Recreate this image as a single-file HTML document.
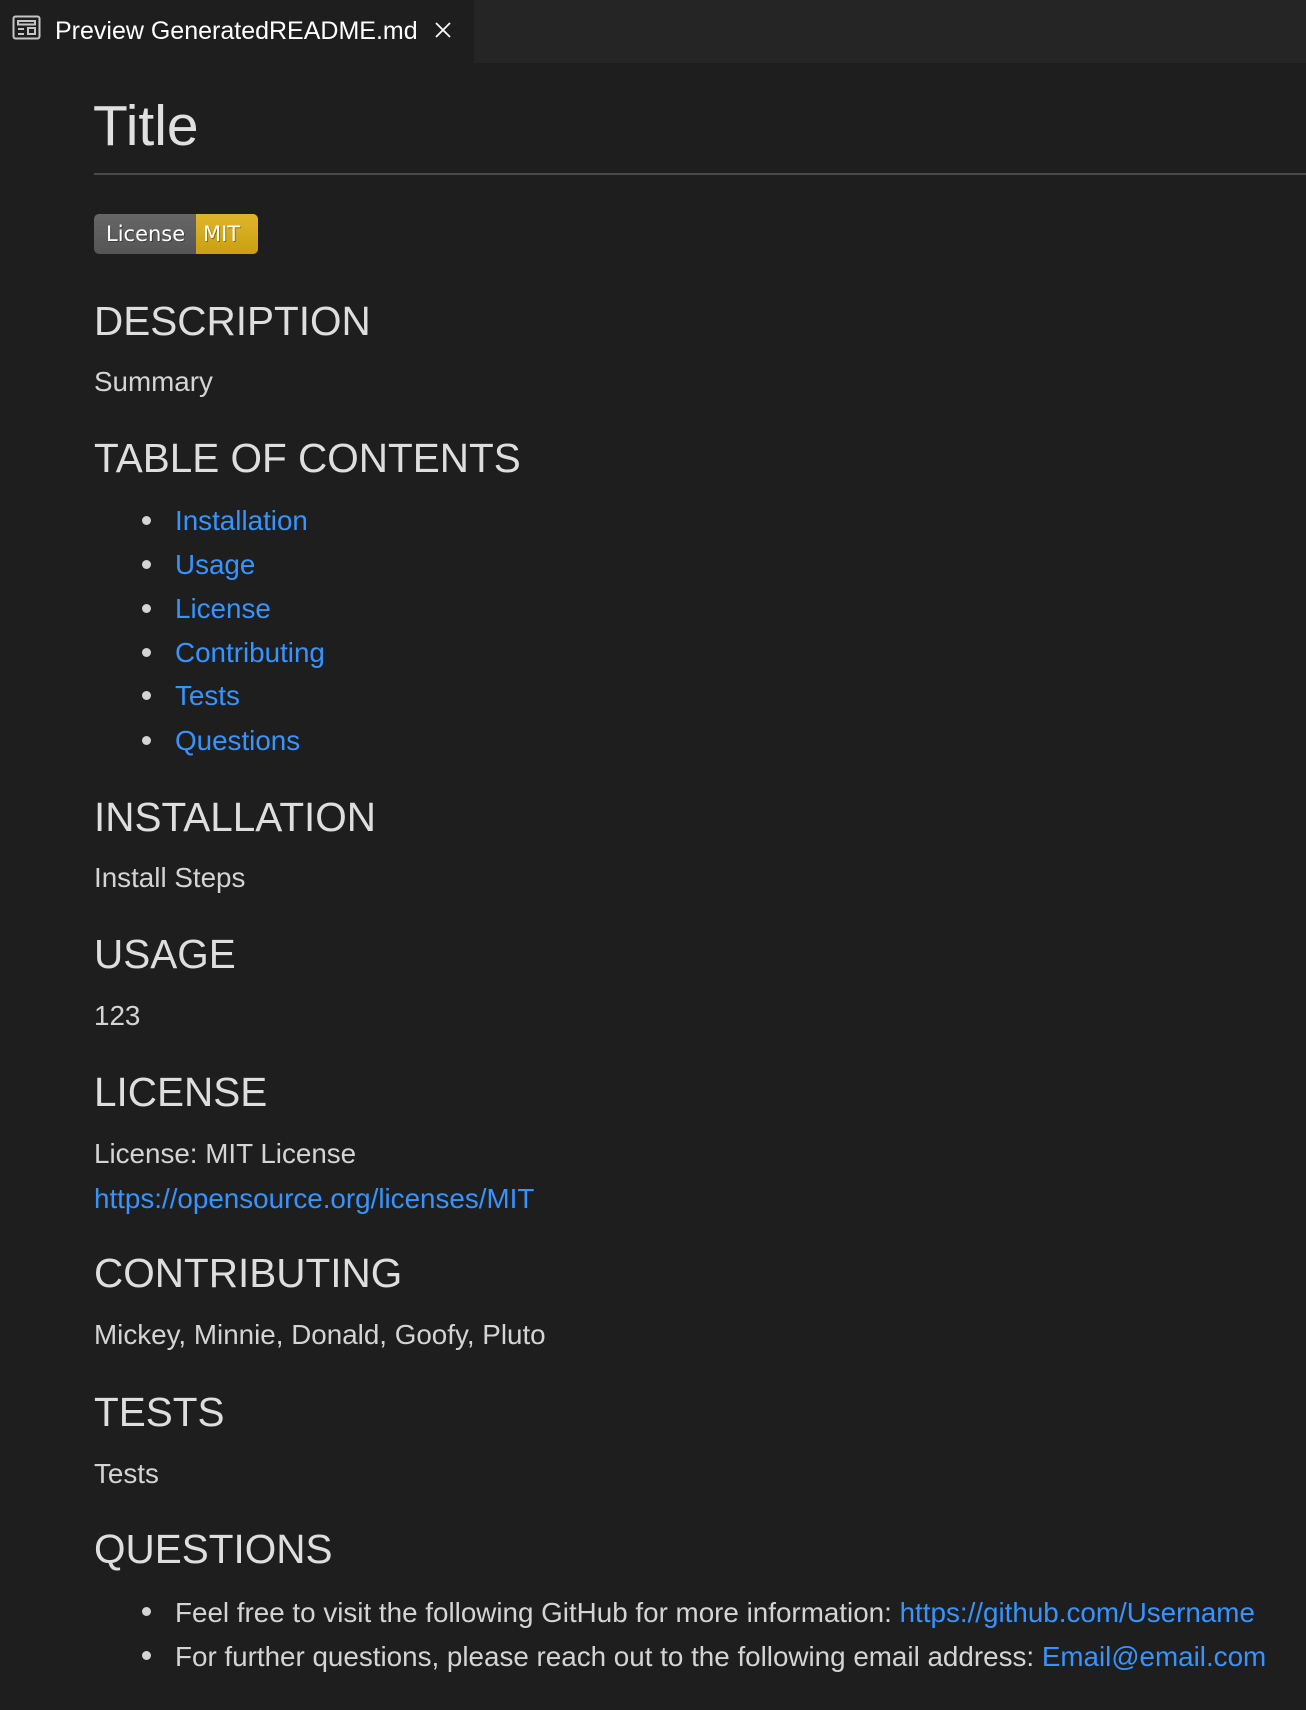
<!DOCTYPE html>
<html><head><meta charset="utf-8"><style>
html,body{margin:0;padding:0}
body{width:1306px;height:1710px;background:#1e1e1e;position:relative;overflow:hidden;font-family:"Liberation Sans",sans-serif;color:#d4d4d4}
.t{position:absolute;white-space:nowrap;line-height:1}
.h2{font-size:40.5px;color:#dedede}
.p{font-size:27.8px;margin-top:1px}
a{color:#3794ff;text-decoration:none}
.b{position:absolute;width:9px;height:9px;border-radius:50%;background:#d4d4d4;left:142px}
</style></head><body>
<div style="position:absolute;left:0;top:0;width:1306px;height:63px;background:#252526"></div>
<div style="position:absolute;left:0;top:0;width:474px;height:63px;background:#1e1e1e"></div>
<svg style="position:absolute;left:12px;top:15px" width="30" height="26" viewBox="0 0 30 26" fill="none" stroke="#c5c5c5" stroke-width="2">
<rect x="1.5" y="1.5" width="26" height="22" rx="2"/>
<rect x="6" y="6" width="17" height="3.5"/>
<line x1="6" y1="14" x2="12" y2="14"/><line x1="6" y1="19" x2="12" y2="19"/>
<rect x="16" y="13" width="7" height="6"/>
</svg>
<div class="t" style="left:55px;top:19px;font-size:25px;color:#fff">Preview GeneratedREADME.md</div>
<svg style="position:absolute;left:434px;top:21px" width="18" height="18" viewBox="0 0 18 18" stroke="#fff" stroke-width="1.8"><line x1="2" y1="2" x2="16" y2="16"/><line x1="16" y1="2" x2="2" y2="16"/></svg>

<div class="t" style="left:93px;top:98px;font-size:57px;color:#e0e0e0">Title</div>
<div style="position:absolute;left:94px;top:173px;width:1212px;height:2px;background:#4a4a4a"></div>

<div style="position:absolute;left:94px;top:214px;width:164px;height:40px;border-radius:5px;overflow:hidden;font-family:'DejaVu Sans',sans-serif;font-size:21px;color:#fff;text-shadow:1px 1px 0 rgba(0,0,0,.35)">
<div style="position:absolute;left:0;top:0;width:102px;height:40px;background:linear-gradient(#666,#555)"><span style="position:absolute;left:12px;top:8px">License</span></div>
<div style="position:absolute;left:102px;top:0;width:62px;height:40px;background:linear-gradient(#e0b52a,#c9a012)"><span style="position:absolute;left:7px;top:8px">MIT</span></div>
</div>

<div class="t h2" style="left:94px;top:301px">DESCRIPTION</div>
<div class="t p" style="left:94px;top:367px">Summary</div>
<div class="t h2" style="left:94px;top:438px">TABLE OF CONTENTS</div>
<div class="t p" style="left:175px;top:506px"><a>Installation</a></div>
<div class="t p" style="left:175px;top:550px"><a>Usage</a></div>
<div class="t p" style="left:175px;top:594px"><a>License</a></div>
<div class="t p" style="left:175px;top:638px"><a>Contributing</a></div>
<div class="t p" style="left:175px;top:681px"><a>Tests</a></div>
<div class="t p" style="left:175px;top:726px"><a>Questions</a></div>
<div class="b" style="top:516px"></div><div class="b" style="top:560px"></div><div class="b" style="top:604px"></div><div class="b" style="top:648px"></div><div class="b" style="top:691px"></div><div class="b" style="top:736px"></div>
<div class="t h2" style="left:94px;top:797px">INSTALLATION</div>
<div class="t p" style="left:94px;top:863px">Install Steps</div>
<div class="t h2" style="left:94px;top:934px">USAGE</div>
<div class="t p" style="left:94px;top:1001px">123</div>
<div class="t h2" style="left:94px;top:1072px">LICENSE</div>
<div class="t p" style="left:94px;top:1139px">License: MIT License</div>
<div class="t p" style="left:94px;top:1184px"><a>https://opensource.org/licenses/MIT</a></div>
<div class="t h2" style="left:94px;top:1253px">CONTRIBUTING</div>
<div class="t p" style="left:94px;top:1320px">Mickey, Minnie, Donald, Goofy, Pluto</div>
<div class="t h2" style="left:94px;top:1392px">TESTS</div>
<div class="t p" style="left:94px;top:1459px">Tests</div>
<div class="t h2" style="left:94px;top:1529px">QUESTIONS</div>
<div class="b" style="top:1607px"></div><div class="t p" style="left:175px;top:1598px">Feel free to visit the following GitHub for more information: <a>https://github.com/Username</a></div>
<div class="b" style="top:1651px"></div><div class="t p" style="left:175px;top:1642px">For further questions, please reach out to the following email address: <a>Email@email.com</a></div>
</body></html>
